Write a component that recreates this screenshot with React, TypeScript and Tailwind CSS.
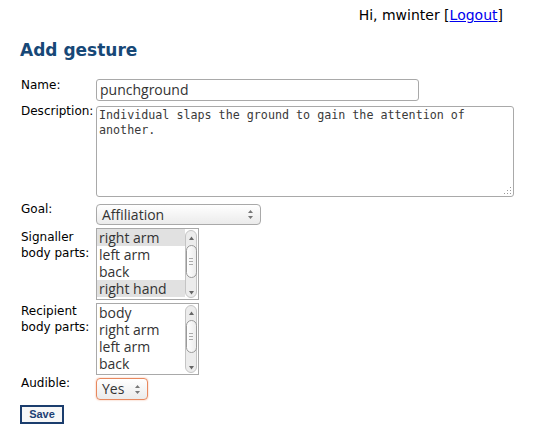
import React from "react";

const Arrows = () => (
  <svg width="7" height="11" viewBox="0 0 7 11" className="shrink-0">
    <path d="M3.5 1 L6 4 L1 4 Z" fill="#777" />
    <path d="M3.5 10 L6 7 L1 7 Z" fill="#777" />
  </svg>
);

const Scrollbar = () => (
  <div className="w-[13px] h-full shrink-0 py-[1px] pr-[1px]">
    <div className="h-full w-full rounded-[6px] border border-[#c4c4c4] bg-[#ececec] flex flex-col items-center">
      <div className="h-[14px] w-full flex items-center justify-center">
        <svg width="7" height="5" viewBox="0 0 7 5">
          <path d="M3.5 0.5 L6 4 L1 4 Z" fill="#666" />
        </svg>
      </div>
      <div className="h-[33px] w-[11px] rounded-[6px] border border-[#9a9a9a] bg-gradient-to-r from-[#ffffff] to-[#ececec] flex flex-col items-center justify-center gap-[2px]">
        <div className="w-[4px] h-px bg-[#aaa]" />
        <div className="w-[4px] h-px bg-[#aaa]" />
        <div className="w-[4px] h-px bg-[#aaa]" />
      </div>
      <div className="flex-1" />
      <div className="h-[10px] w-full flex items-center justify-center">
        <svg width="7" height="5" viewBox="0 0 7 5">
          <path d="M3.5 4.5 L6 1 L1 1 Z" fill="#666" />
        </svg>
      </div>
    </div>
  </div>
);

const ListBox = ({ items, selected }: { items: string[]; selected: number[] }) => (
  <div className="w-[103px] h-[72px] border border-[#a9a9a9] bg-white flex overflow-hidden">
    <div className="flex-1 overflow-hidden flex flex-col">
      {items.map((it, i) => (
        <div
          key={it}
          className={
            "h-[17px] shrink-0 pl-[2px] text-[14px] leading-[17px] text-[#333] whitespace-nowrap " +
            (selected.includes(i) ? "bg-[#e1e1e1]" : "")
          }
        >
          {it}
        </div>
      ))}
    </div>
    <Scrollbar />
  </div>
);

export default function App() {
  const field = "font-['Open_Sans','Liberation_Sans',sans-serif]";
  return (
    <div className="w-[550px] h-[431px] bg-white text-black font-['DejaVu_Sans',sans-serif] overflow-hidden">
      <div className="pt-[7px] pr-[47px] text-right text-[14px] leading-[16px]">
        Hi, mwinter [<a href="#" className="text-[#0000ee] underline">Logout</a>]
      </div>
      <h1 className="mt-[17px] pl-[20px] text-[17px] leading-[20px] font-bold text-[#174877]">
        Add gesture
      </h1>
      <div className="pl-[21px] mt-[18px] text-[12px]">
        {/* Name */}
        <div className="flex">
          <div className="w-[75px] leading-[15px]">Name:</div>
          <div className={"mt-[1px] w-[323px] h-[22px] border border-[#a9a9a9] rounded-[3px] pl-[3px] text-[14px] leading-[20px] text-[#333] " + field}>
            punchground
          </div>
        </div>
        {/* Description */}
        <div className="flex mt-[3px]">
          <div className="w-[75px] leading-[15px]">Description:</div>
          <div className="relative mt-[2px] w-[418px] h-[91px] border border-[#a9a9a9] rounded-[3px] pl-[2px] pr-[4px] pt-[1px] text-[11.7px] leading-[15px] text-[#3a3a3a] font-['DejaVu_Sans_Mono',monospace]">
            Individual slaps the ground to gain the attention of another.
            <svg width="8" height="8" viewBox="0 0 8 8" className="absolute right-[1px] bottom-[1px]">
              <rect x="6" y="0" width="1" height="1" fill="#999" />
              <rect x="3" y="3" width="1" height="1" fill="#999" />
              <rect x="6" y="3" width="1" height="1" fill="#999" />
              <rect x="0" y="6" width="1" height="1" fill="#999" />
              <rect x="3" y="6" width="1" height="1" fill="#999" />
              <rect x="6" y="6" width="1" height="1" fill="#999" />
            </svg>
          </div>
        </div>
        {/* Goal */}
        <div className="flex mt-[5px]">
          <div className="w-[75px] leading-[15px]">Goal:</div>
          <div className={"mt-[2px] w-[165px] h-[21px] border border-[#a9a9a9] rounded-[4px] bg-gradient-to-b from-[#ffffff] to-[#ebebeb] flex items-center pl-[5px] pr-[6px] text-[14px] text-[#333] " + field}>
            <span className="flex-1 leading-[19px]">Affiliation</span>
            <Arrows />
          </div>
        </div>
        {/* Signaller */}
        <div className="flex mt-[3px]">
          <div className="w-[75px] leading-[16px] pt-[1px]">
            Signaller
            <br />
            body parts:
          </div>
          <div className={field}>
            <ListBox
              items={["right arm", "left arm", "back", "right hand", "left hand", "head"]}
              selected={[0, 3]}
            />
          </div>
        </div>
        {/* Recipient */}
        <div className="flex mt-[3px]">
          <div className="w-[75px] leading-[16px]">
            Recipient
            <br />
            body parts:
          </div>
          <div className={field}>
            <ListBox
              items={["body", "right arm", "left arm", "back", "right hand", "left hand"]}
              selected={[]}
            />
          </div>
        </div>
        {/* Audible */}
        <div className="flex mt-[1px]">
          <div className="w-[75px] leading-[15px]">Audible:</div>
          <div className={"mt-[2px] w-[52px] h-[22px] border border-[#e8885e] rounded-[4px] shadow-[0_0_2px_#f3b295] bg-gradient-to-b from-[#ffffff] to-[#ebebeb] flex items-center pl-[5px] pr-[6px] text-[14px] text-[#333] " + field}>
            <span className="flex-1 leading-[20px]">Yes</span>
            <Arrows />
          </div>
        </div>
        {/* Save */}
        <div className="mt-[5px] -ml-[1px]">
          <button className="w-[44px] h-[19px] border-2 border-[#1b3d6d] bg-[#f7f7f7] text-[11px] font-bold text-[#1d3f74] leading-[15px] font-['Liberation_Sans',Arial,sans-serif]">
            Save
          </button>
        </div>
      </div>
    </div>
  );
}
